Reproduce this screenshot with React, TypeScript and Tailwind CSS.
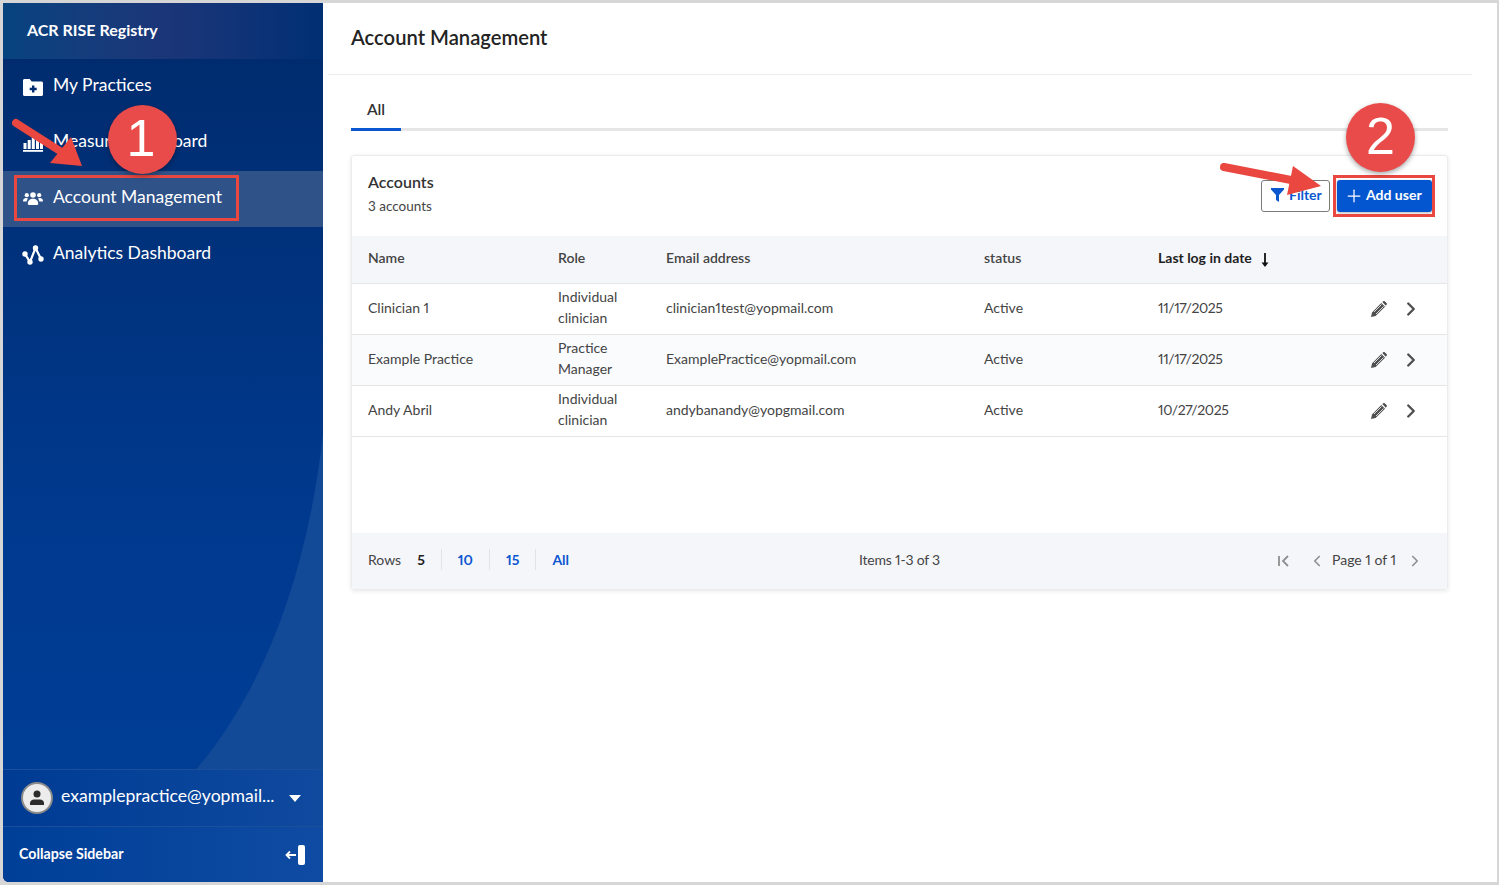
import React from "react";
import { ChevronLeft, ChevronRight, Plus } from "lucide-react";

const font = { fontFamily: '"Lato", "Liberation Sans", sans-serif' };

const rows = [
  { name: "Clinician 1", role: ["Individual", "clinician"], email: "clinician1test@yopmail.com", date: "11/17/2025", alt: false },
  { name: "Example Practice", role: ["Practice", "Manager"], email: "ExamplePractice@yopmail.com", date: "11/17/2025", alt: true },
  { name: "Andy Abril", role: ["Individual", "clinician"], email: "andybanandy@yopgmail.com", date: "10/27/2025", alt: false },
];

function FolderIcon() {
  return (
    <svg width="20" height="17" viewBox="0 0 20 17" className="shrink-0">
      <path fill="#fff" fillRule="evenodd" d="M0 1.500C0 .7.7 0 1.500 0h5.200l2 2.600h9.800c.8 0 1.500.7 1.500 1.500v11.400c0 .8-.7 1.500-1.500 1.500h-17C.7 17 0 16.300 0 15.500zM9 6.500v2.300H6.700v2.400H9v2.300h2.400v-2.300h2.300V8.800h-2.300V6.500z" />
    </svg>
  );
}
function BarsIcon() {
  return (
    <svg width="20" height="18" viewBox="0 0 20 18" className="shrink-0" fill="#fff">
      <rect x="0.500" y="9" width="3" height="6" />
      <rect x="4.700" y="6" width="3" height="9" />
      <rect x="8.800" y="2" width="3" height="13" />
      <rect x="13" y="6" width="3" height="9" />
      <rect x="17" y="9" width="3" height="6" />
      <rect x="0" y="16" width="20" height="1.800" />
    </svg>
  );
}
function UsersIcon() {
  return (
    <svg width="20" height="14" viewBox="0 0 20 14" className="shrink-0" fill="#fff">
      <circle cx="3.800" cy="3.200" r="2.100" />
      <circle cx="16.200" cy="3.200" r="2.100" />
      <circle cx="10" cy="3" r="2.800" />
      <path d="M0 9c0-2 1.500-3 3-3 .8 0 1.400.2 2 .6C4.200 7.500 3.700 8.500 3.600 9.500H1c-.6 0-1-.1-1-.5zM20 9c0-2-1.500-3-3-3-.8 0-1.400.2-2 .6.800.900 1.300 1.900 1.400 2.900H19c.6 0 1-.1 1-.5z" />
      <path d="M4.800 11.500c0-2.800 2.200-4.700 5.200-4.700s5.200 1.900 5.200 4.700c0 1-.7 1.500-1.500 1.500H6.300c-.8 0-1.500-.5-1.500-1.500z" />
    </svg>
  );
}
function NodesIcon() {
  return (
    <svg width="22" height="20" viewBox="0 0 22 20" className="shrink-0 -ml-[1px]">
      <path d="M3 9l5 8 5.500-14 5.500 11" fill="none" stroke="#fff" strokeWidth="2.200" />
      <circle cx="3" cy="9" r="2.700" fill="#fff" />
      <circle cx="8" cy="17" r="2.700" fill="#fff" />
      <circle cx="13.500" cy="3" r="2.700" fill="#fff" />
      <circle cx="19" cy="14" r="2.700" fill="#fff" />
    </svg>
  );
}
function FilterIcon() {
  return (
    <svg width="13" height="14" viewBox="0 0 13 14" className="shrink-0">
      <path fill="#0b57d0" d="M0 0h13v1.600L8 7v7L5 12V7L0 1.600z" />
    </svg>
  );
}
function PencilFill() {
  return (
    <svg width="16" height="16" viewBox="0 0 16 16" className="shrink-0">
      <path fill="#4f4f4f" d="M0 16l1-4.600L10.300 2l3.700 3.700L4.600 15zM11.300 1l1-.8c.5-.3 1-.3 1.400 0l2 2c.4.4.4 1 0 1.400l-.9 1.100z" />
      <path stroke="#fff" strokeWidth=".8" d="M3 11l7.500-7.500M5 13l7.500-7.500" />
    </svg>
  );
}

function NavItem({ icon, label, active }: { icon: React.ReactNode; label: string; active?: boolean }) {
  return (
    <div className={`flex h-14 items-center pl-[20px] ${active ? "bg-[#2f5288]" : ""}`}>
      <div className="flex w-[30px] shrink-0 items-center">{icon}</div>
      <span className="pb-[3px] text-[17.500px] text-white">{label}</span>
    </div>
  );
}

function Badge({ n, className }: { n: string; className: string }) {
  return (
    <div
      className={`absolute flex h-[69px] w-[69px] items-center justify-center rounded-full bg-[#e94b4b] pb-[3px] text-[52px] leading-none text-white shadow-[0_2px_5px_rgba(0,0,0,0.35)] ${className}`}
      style={{ fontFamily: '"Liberation Sans", sans-serif' }}
    >
      {n}
    </div>
  );
}

export default function App() {
  return (
    <div className="relative flex h-[885px] w-[1499px] overflow-hidden bg-[#d6d6d6] pb-[3px] pl-[3px] pr-[2px] pt-[3px] text-[#444] [font-variant-numeric:proportional-nums]" style={font}>
      <aside className="relative flex w-[320px] shrink-0 flex-col overflow-hidden rounded-bl-md bg-[#002d72]">
        <svg className="absolute inset-0 h-full w-full" viewBox="0 0 320 879" preserveAspectRatio="none">
          <defs>
            <linearGradient id="side" x1="0" y1="0" x2="0" y2="1">
              <stop offset="0" stopColor="#002a6b" />
              <stop offset="0.6" stopColor="#003a8f" />
              <stop offset="1" stopColor="#003f98" />
            </linearGradient>
          </defs>
          <rect width="320" height="879" fill="url(#side)" />
          <path d="M190 770C260 690 305 570 320 430V770z" fill="#134a97" />
        </svg>
        <div className="relative flex h-14 items-center bg-gradient-to-r from-[#06437f] via-[#1b3679] to-[#002f74] pb-[3px] pl-6 text-[16px] font-bold text-white">
          ACR RISE Registry
        </div>
        <nav className="relative flex flex-1 flex-col">
          <NavItem icon={<FolderIcon />} label="My Practices" />
          <NavItem icon={<BarsIcon />} label="Measure Dashboard" />
          <NavItem icon={<UsersIcon />} label="Account Management" active />
          <NavItem icon={<NodesIcon />} label="Analytics Dashboard" />
        </nav>
        <div className="relative flex h-[57px] items-center border-t border-[#1b4f9c] bg-gradient-to-r from-[#003b93] to-[#0f4a9f] pl-[18px] pr-[22px]">
          <div className="flex h-8 w-8 items-center justify-center rounded-full border-2 border-[#8a8a8a] bg-[#ececec]">
            <svg width="16" height="16" viewBox="0 0 16 16" fill="#2b2b2b">
              <circle cx="8" cy="4" r="3.500" />
              <path d="M1 15v-2c0-2 2-3.500 4-3.500h6c2 0 4 1.500 4 3.500v2z" />
            </svg>
          </div>
          <span className="ml-2 min-w-0 flex-1 whitespace-nowrap pb-[3px] text-[17.600px] text-white">examplepractice@yopmail...</span>
          <div className="h-0 w-0 border-x-[6px] border-t-[7px] border-x-transparent border-t-white" />
        </div>
        <div className="relative flex h-14 items-center justify-between border-t border-[#1b4f9c] bg-gradient-to-r from-[#003f98] to-[#0f4ba2] pl-4 pr-[18px] text-[14.200px] font-bold text-white">
          <span className="pb-[1px]">Collapse Sidebar</span>
          <div className="flex items-center gap-[2px]">
            <svg width="11" height="10" viewBox="0 0 11 10" fill="none" stroke="#fff" strokeWidth="1.800">
              <path d="M11 5H2M5 1.500L1.500 5 5 8.500" />
            </svg>
            <div className="h-5 w-[7px] rounded-[2px] bg-white" />
          </div>
        </div>
      </aside>

      <main className="flex-1 bg-white pl-[5px]">
        <header className="mr-[25px] flex h-[72px] items-center border-b border-[#ececec] pb-[3px] pl-[23px] text-[20.200px] font-semibold text-[#232323]">
          Account Management
        </header>
        <div className="pl-[23px] pr-[49px]">
          <div className="mt-[16px] flex h-[40px] border-b-[3px] border-[#e6e6e6]">
            <div className="-mb-[3px] flex w-[50px] items-center justify-center border-b-[3px] border-[#0b57d0] text-[15.500px] font-semibold text-[#333]">
              All
            </div>
          </div>
          <section className="mt-6 rounded-[3px] border border-[#ececec] shadow-[0_1px_4px_rgba(0,0,0,0.1)]">
            <div className="flex h-[80px] items-start justify-between pl-4 pr-[15px]">
              <div className="pt-[16px]">
                <div className="text-[16px] font-semibold leading-[20px] text-[#333]">Accounts</div>
                <div className="mt-[5px] text-[13.500px] leading-[18px]">3 accounts</div>
              </div>
              <div className="mt-[24px] flex items-center gap-[7px]">
                <button className="flex h-8 w-[69px] items-center gap-[5px] rounded-[3px] border border-[#7a7a7a] pb-[3px] pl-[9px] text-[14px] font-bold text-[#0b57d0]">
                  <FilterIcon />
                  Filter
                </button>
                <button className="flex h-8 w-[95px] items-center gap-[2px] rounded-[3px] bg-[#0456d0] pl-[7px] text-[14px] font-bold text-white shadow-[0_1px_3px_rgba(0,0,0,0.3)]">
                  <Plus size={20} strokeWidth={1.500} />
                  <span className="pb-[3px]">Add user</span>
                </button>
              </div>
            </div>

            <div className="flex h-[48px] items-center border-b border-[#e6e6e6] bg-[#f5f6fa] pb-[4px] pl-4 text-[14px] font-semibold text-[#444]">
              <div className="w-[190px]">Name</div>
              <div className="w-[108px]">Role</div>
              <div className="w-[318px]">Email address</div>
              <div className="w-[174px]">status</div>
              <div className="flex items-center gap-[9px] font-bold text-[#1f1f1f]">
                Last log in date
                <svg width="8" height="14" viewBox="0 0 8 14" fill="none" className="translate-y-[2px]">
                  <path d="M4 0v11" stroke="#111" strokeWidth="1.800" />
                  <path d="M.5 9.500h7L4 14z" fill="#111" />
                </svg>
              </div>
            </div>

            {rows.map((r) => (
              <div key={r.email} className={`flex h-[51px] items-center border-b border-[#e6e6e6] pb-[3px] pl-4 text-[14px] ${r.alt ? "bg-[#fafbfd]" : "bg-white"}`}>
                <div className="w-[190px]">{r.name}</div>
                <div className="w-[108px] -translate-y-[1px] leading-[21px]">
                  <div>{r.role[0]}</div>
                  <div>{r.role[1]}</div>
                </div>
                <div className="w-[318px]">{r.email}</div>
                <div className="w-[174px]">Active</div>
                <div className="w-[213px] tracking-[-0.4px]">{r.date}</div>
                <div className="flex translate-y-[1px] items-center gap-[13px]">
                  <PencilFill />
                  <ChevronRight size={22} strokeWidth={2.600} className="text-[#4f4f4f]" />
                </div>
              </div>
            ))}

            <div className="h-[96px]" />

            <div className="flex h-[56px] items-center bg-[#f5f6fa] pb-[3px] pl-4 pr-[23px] text-[14px]">
              <div className="flex w-[491px] items-center">
                <span className="mr-[16px]">Rows</span>
                <span className="border-r border-[#e1e3e8] pr-4 font-bold text-[#222]">5</span>
                <span className="border-r border-[#e1e3e8] px-4 font-bold text-[#0b57d0]">10</span>
                <span className="border-r border-[#e1e3e8] px-4 font-bold text-[#0b57d0]">15</span>
                <span className="pl-4 font-bold text-[#0b57d0]">All</span>
              </div>
              <div className="tracking-[-0.2px]">Items 1-3 of 3</div>
              <div className="ml-auto flex translate-y-[1px] items-center text-[#8f8f8f]">
                <svg width="14" height="14" viewBox="0 0 14 14" fill="none" stroke="currentColor" strokeWidth="1.800" className="mr-[17px]">
                  <path d="M2 2v10M11 2L6 7l5 5" />
                </svg>
                <ChevronLeft size={18} strokeWidth={2.200} className="mr-[6px]" />
                <span className="mr-[10px] -translate-y-[1px] text-[#444]">Page 1 of 1</span>
                <ChevronRight size={18} strokeWidth={2.200} />
              </div>
            </div>
          </section>
        </div>
      </main>

      {/* annotation layer */}
      <div className="absolute left-[14px] top-[175px] h-[46px] w-[225px] border-[3px] border-[#e9473f]" />
      <div className="absolute left-[1333px] top-[175px] h-[42px] w-[102px] border-[3px] border-[#e9473f]" />
      <Badge n="1" className="left-[108px] top-[105px] pr-[3px]" />
      <Badge n="2" className="left-[1346px] top-[103px]" />
      <svg className="pointer-events-none absolute left-0 top-0 h-[885px] w-[1499px]" viewBox="0 0 1499 885">
        <path d="M16 123l55 35" stroke="#e9473f" strokeWidth="8" strokeLinecap="round" />
        <path d="M82 166L50 163 71 137z" fill="#e9473f" />
        <path d="M1224 167l72 14" stroke="#e9473f" strokeWidth="8" strokeLinecap="round" />
        <path d="M1321 186L1293 166 1287 195z" fill="#e9473f" />
      </svg>
    </div>
  );
}
